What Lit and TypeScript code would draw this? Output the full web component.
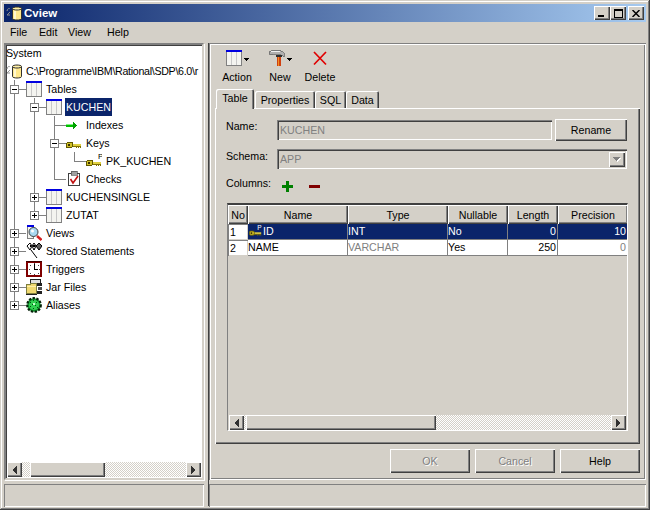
import { LitElement, html, css, svg } from "lit";
import { customElement } from "lit/decorators.js";

const line = "#808080";

// tree connector cell: v = vertical, t = tee, l = elbow, m/p = boxes with a line below, P = plus box closing a branch
const guide = (kind: string, last: boolean) => {
  const w = last ? 22 : 20;
  const down = kind === "v" || kind === "t" || kind === "m" || kind === "p";
  const box = kind === "m" || kind === "p" || kind === "P";
  return html`<svg width=${w} height="18" viewBox="0 0 ${w} 18" shape-rendering="crispEdges">
    <rect x="10" y="0" width="1" height="9" fill=${line}/>
    ${down ? svg`<rect x="10" y="9" width="1" height="9" fill=${line}/>` : ""}
    ${kind !== "v" ? svg`<rect x="10" y="9" width=${w - 10} height="1" fill=${line}/>` : ""}
    ${box
      ? svg`<rect x="6.5" y="5.5" width="8" height="8" fill="#fff" stroke=${line}/>
            <rect x="8" y="9" width="5" height="1" fill="#000"/>
            ${kind !== "m" ? svg`<rect x="10" y="7" width="1" height="5" fill="#000"/>` : ""}`
      : ""}
  </svg>`;
};

const tableIcon = () => html`<svg class="ic" width="16" height="16" viewBox="0 0 16 16" shape-rendering="crispEdges">
  <rect x="0.5" y="0.5" width="15" height="15" fill="#f4f4f0" stroke="#808080"/>
  <rect x="0" y="0" width="16" height="2" fill="#0000e0"/>
  <rect x="5" y="2" width="1" height="13" fill="#c8c8c8"/>
  <rect x="10" y="2" width="1" height="13" fill="#c8c8c8"/>
</svg>`;

const dbIcon = () => html`<svg width="16" height="15" viewBox="0 0 16 15">
  <path d="M1 5 C2 2 3 2 4 3 M1 9 L4 6 M1 9 H4" fill="none" stroke="#909090"/>
  <path d="M6.5 2.5 C6.5 0.5 15.5 0.5 15.5 2.5 V12.5 C15.5 14.5 6.5 14.5 6.5 12.5 Z" fill="#ffe88c" stroke="#303030"/>
  <path d="M6.5 2.5 C6.5 4.5 15.5 4.5 15.5 2.5" fill="#fff8c0" stroke="#303030"/>
  <rect x="8" y="5" width="2" height="8" fill="#fff8d0"/>
</svg>`;

const arrowIcon = () => html`<svg class="ic" width="16" height="16" viewBox="0 0 16 16" shape-rendering="crispEdges">
  <rect x="0" y="7" width="7" height="3" fill="#00c000"/>
  <rect x="0" y="7" width="7" height="1" fill="#80f080"/>
  <path d="M7 5 L11.5 8.5 L7 12 Z" fill="#00a000"/>
</svg>`;

const keyShape = svg`<rect x="6" y="9" width="9" height="2" fill="#e0d040"/>
  <rect x="6" y="11" width="9" height="1" fill="#807000"/>
  <rect x="10" y="12" width="1" height="1" fill="#807000"/>
  <rect x="12" y="12" width="1" height="1" fill="#807000"/>
  <rect x="14" y="12" width="1" height="1" fill="#807000"/>
  <rect x="0.5" y="7.5" width="6" height="5" rx="1.5" fill="#d0c028" stroke="#605800"/>
  <rect x="2" y="9" width="2" height="2" fill="#383000"/>`;

const keyIcon = () => html`<svg class="ic" width="16" height="16" viewBox="0 0 16 16" shape-rendering="crispEdges">${keyShape}</svg>`;

const pkIcon = () => html`<svg class="ic" width="16" height="16" viewBox="0 0 16 16" shape-rendering="crispEdges">
  ${keyShape}<text x="12" y="6" font-family="Liberation Sans" font-size="8" fill="#000">P</text>
</svg>`;

const checkIcon = () => html`<svg class="ic" width="16" height="16" viewBox="0 0 16 16" shape-rendering="crispEdges">
  <rect x="2.5" y="2.5" width="11" height="12" fill="#fff" stroke="#404040"/>
  <rect x="5" y="0" width="6" height="4" fill="#a0a0a0" stroke="#404040" stroke-width="0.6"/>
  <path d="M4.5 8 L7 12 L12 5" fill="none" stroke="#c01010" stroke-width="1.6" shape-rendering="auto"/>
</svg>`;

const viewsIcon = () => html`<svg class="ic" width="16" height="16" viewBox="0 0 16 16">
  <rect x="1.5" y="0.5" width="6" height="13" fill="#f4f4f0" stroke="#808080"/>
  <rect x="1" y="0" width="7" height="2" fill="#0000e0"/>
  <path d="M11 11 L15.5 15" stroke="#d02020" stroke-width="2.4"/>
  <circle cx="7.5" cy="7" r="4.5" fill="#a8d8f0" stroke="#404040"/>
  <circle cx="6.5" cy="6" r="1.5" fill="#fff"/>
</svg>`;

const storedIcon = () => html`<svg class="ic" width="16" height="16" viewBox="0 0 16 16">
  <path d="M1 3 H15 M8 3 V7 M5 7 L11 15" stroke="#000" fill="none"/>
  <path d="M1 3 L4 0 L6 3 L4 7 Z M6 3 L8 0 L10 3 L8 7 Z" fill="#fff" stroke="#000"/>
  <path d="M10 3 L13 0 L16 3 L13 7 Z" fill="#606060" stroke="#000"/>
  <rect x="4" y="2" width="1" height="2" fill="#000"/>
  <rect x="7" y="2" width="2" height="2" fill="#000"/>
</svg>`;

const triggerIcon = () => html`<svg class="ic" width="16" height="16" viewBox="0 0 16 16" shape-rendering="crispEdges">
  <rect x="1" y="1" width="14" height="14" fill="#fff" stroke="#800000" stroke-width="2"/>
  <rect x="0" y="0" width="16" height="1" fill="#400000"/>
  <rect x="8" y="3" width="1" height="6" fill="#000"/>
  <rect x="8" y="8" width="4" height="1" fill="#000"/>
  <g fill="#404040">
    <rect x="8" y="2" width="1" height="1"/><rect x="12" y="4" width="1" height="1"/>
    <rect x="13" y="8" width="1" height="1"/><rect x="12" y="12" width="1" height="1"/>
    <rect x="8" y="13" width="1" height="1"/><rect x="4" y="12" width="1" height="1"/>
    <rect x="3" y="8" width="1" height="1"/><rect x="4" y="4" width="1" height="1"/>
  </g>
</svg>`;

const jarIcon = () => html`<svg class="ic" width="16" height="16" viewBox="0 0 16 16" shape-rendering="crispEdges">
  <rect x="4" y="0" width="10" height="4" fill="#e0e0e0" stroke="#202020" stroke-width="1"/>
  <rect x="11" y="4" width="5" height="3" fill="#202020"/>
  <rect x="12" y="8" width="4" height="3" fill="#505050"/>
  <rect x="11" y="12" width="5" height="3" fill="#202020"/>
  <path d="M0.5 5.5 H4 L5 4.5 H10 V14.5 H0.5 Z" fill="#f0d870" stroke="#808040"/>
  <rect x="1" y="7" width="9" height="1" fill="#fff0a8"/>
  <rect x="0" y="15" width="11" height="1" fill="#202020"/>
</svg>`;

const aliasIcon = () => html`<svg class="ic" width="16" height="16" viewBox="0 0 16 16">
  <circle cx="8" cy="8" r="6.8" fill="#10a030" stroke="#042008" stroke-width="2.2" stroke-dasharray="2.4 1.4"/>
  <circle cx="8" cy="8" r="5" fill="#30d050"/>
  <g fill="#005010">
    <rect x="4" y="5" width="1" height="1"/><rect x="7" y="3" width="1" height="1"/><rect x="10" y="5" width="1" height="1"/>
    <rect x="6" y="7" width="1" height="1"/><rect x="9" y="8" width="1" height="1"/><rect x="4" y="9" width="1" height="1"/>
    <rect x="7" y="11" width="1" height="1"/><rect x="11" y="10" width="1" height="1"/>
  </g>
  <rect x="7" y="6" width="2" height="2" fill="#c0ffc8"/>
</svg>`;

const hammerIcon = () => html`<svg width="16" height="16" viewBox="0 0 16 16" shape-rendering="crispEdges">
  <path d="M0 2 L4 0 H11 L15 3 L15 7 L11 4 H6 L2 5 L0 4 Z" fill="#b0b0b0" stroke="#606060" stroke-width="0.7"/>
  <rect x="2" y="1" width="9" height="1" fill="#f0f0f0"/>
  <rect x="8" y="7" width="4" height="9" fill="#d04010"/>
  <rect x="9" y="7" width="1" height="9" fill="#f09020"/>
  <rect x="7" y="5" width="6" height="2" fill="#303030"/>
</svg>`;

const deleteIcon = () => html`<svg width="16" height="16" viewBox="0 0 16 16">
  <path d="M2 2 L14 14.5 M14 2 L2 14.5" stroke="#e00000" stroke-width="1.7" fill="none"/>
</svg>`;

const caret = () => html`<svg class="caret" width="5" height="3" viewBox="0 0 5 3" shape-rendering="crispEdges"><path d="M0 0 H5 L2.5 3 Z" fill="#000"/></svg>`;

const plusIcon = () => html`<svg width="11" height="11" viewBox="0 0 11 11" shape-rendering="crispEdges">
  <rect x="4" y="0" width="3" height="11" fill="#008000"/><rect x="0" y="4" width="11" height="3" fill="#008000"/>
</svg>`;
const minusIcon = () => html`<svg width="11" height="11" viewBox="0 0 11 11" shape-rendering="crispEdges">
  <rect x="0" y="4" width="11" height="3" fill="#800000"/>
</svg>`;

const dirArrow = (left: boolean) => html`<svg width="5" height="8" viewBox="0 0 5 8" shape-rendering="crispEdges">
  <path d=${left ? "M5 0 V8 L0 4 Z" : "M0 0 V8 L5 4 Z"} fill="#303030"/>
</svg>`;

interface TreeRow {
  guides: string;
  icon: () => unknown;
  label: string;
  selected?: boolean;
}

const tree: TreeRow[] = [
  { guides: "m", icon: tableIcon, label: "Tables" },
  { guides: "vm", icon: tableIcon, label: "KUCHEN", selected: true },
  { guides: "vvt", icon: arrowIcon, label: "Indexes" },
  { guides: "vvm", icon: keyIcon, label: "Keys" },
  { guides: "vvvl", icon: pkIcon, label: "PK_KUCHEN" },
  { guides: "vvl", icon: checkIcon, label: "Checks" },
  { guides: "vp", icon: tableIcon, label: "KUCHENSINGLE" },
  { guides: "vP", icon: tableIcon, label: "ZUTAT" },
  { guides: "p", icon: viewsIcon, label: "Views" },
  { guides: "p", icon: storedIcon, label: "Stored Statements" },
  { guides: "p", icon: triggerIcon, label: "Triggers" },
  { guides: "p", icon: jarIcon, label: "Jar Files" },
  { guides: "P", icon: aliasIcon, label: "Aliases" },
];

const columns = [
  { name: "No", w: 20 },
  { name: "Name", w: 100 },
  { name: "Type", w: 100 },
  { name: "Nullable", w: 60 },
  { name: "Length", w: 50 },
  { name: "Precision", w: 70 },
];

@customElement("app-root")
export class AppRoot extends LitElement {
  static styles = css`
    :host {
      display: block;
      font-family: "Liberation Sans", Arial, sans-serif;
      font-size: 10.67px;
      color: #000;
    }
    * {
      box-sizing: border-box;
    }
    svg {
      display: block;
      flex: none;
    }
    .window {
      width: 650px;
      height: 510px;
      padding: 4px;
      background: #d4d0c8;
      box-shadow: inset -1px -1px #404040, inset 1px 1px #d4d0c8, inset -2px -2px #808080, inset 2px 2px #fff;
      display: flex;
      flex-direction: column;
    }
    .title {
      height: 18px;
      flex: none;
      background: linear-gradient(90deg, #0a246a, #a6caf0);
      display: flex;
      align-items: center;
      padding: 0 2px 0 2px;
      color: #fff;
      font-weight: bold;
      font-size: 11.5px;
    }
    .title .name {
      margin-left: 2px;
      flex: 1;
    }
    .winbtn {
      width: 16px;
      height: 14px;
      background: #d4d0c8;
      box-shadow: inset 1px 1px #fff, inset -1px -1px #404040, inset -2px -2px #808080;
      display: flex;
      align-items: center;
      justify-content: center;
    }
    .winbtn.close {
      margin-left: 2px;
    }
    .winbtn .minglyph {
      margin: 6px 2px 0 0;
    }
    .menu {
      height: 20px;
      flex: none;
      display: grid;
      grid-template-columns: 29px 29px 39px auto;
      align-items: center;
      padding-left: 6px;
    }
    .main {
      margin-top: 1px;
      flex: 1;
      display: flex;
      min-height: 0;
    }
    .col {
      display: flex;
      flex-direction: column;
      gap: 4px;
    }
    .col.left {
      width: 200px;
    }
    .col.right {
      width: 437px;
    }
    .sash {
      width: 5px;
      border-right: 1px solid #404040;
    }
    .status {
      height: 23px;
      flex: none;
      box-shadow: inset 1px 1px #808080, inset -1px -1px #fff;
    }
    .treepane {
      height: 437px;
      flex: none;
      background: #fff;
      border: 2px solid;
      border-color: #808080 #d4d0c8 #d4d0c8 #808080;
      box-shadow: 1px 1px #fff, inset 1px 1px #404040;
      display: flex;
      flex-direction: column;
      overflow: hidden;
    }
    .tree {
      flex: 1;
      overflow: hidden;
      min-height: 0;
      margin-top: -1px;
    }
    .row {
      height: 18px;
      display: flex;
      align-items: center;
      white-space: nowrap;
    }
    .guides {
      display: flex;
      margin-left: -2px;
    }
    .dbrow .path {
      margin-left: 4px;
      letter-spacing: -0.3px;
    }
    .label {
      margin-left: 3px;
      padding: 0 1px;
      height: 18px;
      line-height: 18px;
    }
    .label.sel {
      background: #0a246a;
      color: #fff;
    }
    .hbar {
      height: 15px;
      flex: none;
      display: flex;
      margin: 0 1px;
      background-image: conic-gradient(#d4d0c8 25%, #fff 0 50%, #d4d0c8 0 75%, #fff 0);
      background-size: 2px 2px;
    }
    .treepane .hbar {
      margin: 0 1px 1px 1px;
    }
    .sbtn {
      width: 15px;
      flex: none;
      background: #d4d0c8;
      box-shadow: inset 1px 1px #fff, inset -1px -1px #404040, inset -2px -2px #808080;
      display: flex;
      align-items: center;
      justify-content: center;
    }
    .thumb {
      background: #d4d0c8;
      box-shadow: inset 1px 1px #fff, inset -1px -1px #404040, inset -2px -2px #808080;
    }
    .treepane .thumb {
      margin-left: 8px;
      width: 75px;
    }
    .spacer {
      flex: 1;
    }
    .rightpane {
      height: 437px;
      flex: none;
      padding: 2px 6px 0 6px;
      box-shadow: inset 1px 1px #808080, inset 2px 2px #fff, inset -1px -1px #fff, inset -2px -2px #808080;
      display: flex;
      flex-direction: column;
    }
    .toolbar {
      height: 44px;
      flex: none;
      display: flex;
    }
    .tool {
      display: flex;
      flex-direction: column;
      align-items: center;
    }
    .tool.action {
      width: 44px;
    }
    .tool.newbtn {
      width: 42px;
    }
    .tool.del {
      width: 38px;
    }
    .tool .top {
      height: 16px;
      margin-top: 5px;
      display: flex;
      align-items: center;
      gap: 2px;
    }
    .tool .text {
      margin-top: 5px;
    }
    .caret {
      margin-top: 2px;
    }
    .tabs {
      height: 19px;
      flex: none;
      display: flex;
      align-items: flex-end;
      padding-left: 1px;
    }
    .tab {
      height: 17px;
      padding-top: 3px;
      text-align: center;
      background: #d4d0c8;
      border-radius: 2px 2px 0 0;
      box-shadow: inset 1px 1px #fff, inset -1px 0 #404040, inset -2px 0 #808080;
    }
    .tab.active {
      height: 20px;
      margin-bottom: -1px;
      padding-top: 3px;
      position: relative;
      z-index: 1;
    }
    .body {
      height: 336px;
      flex: none;
      padding: 11px 13px 0 11px;
      box-shadow: inset 1px 1px #fff, inset -1px -1px #404040, inset -2px -2px #808080;
      display: flex;
      flex-direction: column;
    }
    .form-row {
      display: grid;
      grid-template-columns: 51px 1fr;
    }
    .form-row.name-row {
      height: 22px;
    }
    .form-row.schema-row {
      height: 20px;
      margin-top: 8px;
    }
    .form-row.columns-row {
      height: 20px;
      margin-top: 6px;
    }
    .lbl {
      padding-top: 1px;
    }
    .columns-row .lbl {
      padding-top: 2px;
    }
    .name-fields {
      display: flex;
      gap: 3px;
    }
    .field {
      flex: 1;
      height: 20px;
      margin-top: 1px;
      padding: 4px 0 0 3px;
      color: #808080;
      box-shadow: inset 1px 1px #808080, inset 2px 2px #404040, inset -1px -1px #fff;
    }
    .combo {
      height: 20px;
      padding: 4px 0 0 3px;
      color: #808080;
      box-shadow: inset 1px 1px #808080, inset 2px 2px #404040, inset -1px -1px #fff;
      display: flex;
      justify-content: space-between;
    }
    .combo .drop {
      width: 16px;
      height: 15px;
      margin: -1px 2px 0 0;
      background: #d4d0c8;
      box-shadow: inset 1px 1px #fff, inset -1px -1px #404040, inset -2px -2px #808080;
      display: flex;
      align-items: center;
      justify-content: center;
    }
    .btn {
      background: #d4d0c8;
      box-shadow: inset 1px 1px #fff, inset -1px -1px #404040, inset -2px -2px #808080;
      display: flex;
      align-items: center;
      justify-content: center;
    }
    .btn.rename {
      width: 72px;
      height: 22px;
    }
    .btn.dialog {
      width: 80px;
      height: 24px;
    }
    .btn.off {
      color: #808080;
      text-shadow: 1px 1px #fff;
    }
    .addrem {
      display: flex;
      gap: 16px;
      padding: 6px 0 0 5px;
    }
    .grid {
      width: 401px;
      height: 228px;
      margin: 8px 0 0 1px;
      flex: none;
      border-style: solid;
      border-width: 2px 1px 1px 1px;
      border-color: #404040 #fff #fff #808080;
      display: flex;
      flex-direction: column;
      overflow: hidden;
    }
    .grid .hbar {
      margin: 0 1px 0 1px;
    }
    .grid .thumb {
      margin-left: 2px;
      width: 190px;
    }
    .line {
      display: flex;
      flex: none;
      width: 400px;
    }
    .head {
      height: 19px;
      display: flex;
      align-items: center;
      justify-content: center;
      background: #d4d0c8;
      box-shadow: inset 1px 1px #fff, inset -1px -1px #404040, inset -2px -2px #808080;
    }
    .cell {
      height: 16px;
      line-height: 15px;
      padding: 0 1px 0 0;
      background: #fff;
      border-right: 1px solid #808080;
      border-bottom: 1px solid #808080;
      white-space: nowrap;
      overflow: hidden;
      display: flex;
      align-items: center;
      gap: 1px;
    }
    .cell.num {
      justify-content: flex-end;
    }
    .cell.rowhead {
      box-shadow: inset 1px 1px #808080, inset -1px -1px #d4d0c8;
      padding-left: 2px;
      border: 0;
    }
    .sel .cell:not(.rowhead) {
      background: #0a246a;
      color: #fff;
    }
    .grey {
      color: #808080;
    }
    .sel .cell.grey {
      color: #fff;
    }
    .gkey {
      margin-left: 1px;
    }
    .dialogbar {
      display: flex;
      justify-content: flex-end;
      gap: 5px;
      margin-top: 5px;
    }
  `;

  private hbar() {
    return html`<div class="hbar">
      <div class="sbtn">${dirArrow(true)}</div>
      <div class="thumb"></div>
      <div class="spacer"></div>
      <div class="sbtn">${dirArrow(false)}</div>
    </div>`;
  }

  private treeRow(r: TreeRow) {
    const cells = r.guides.split("");
    return html`<div class="row">
      <div class="guides">
        ${cells.map((c, i) => guide(c, i === cells.length - 1))}
      </div>
      ${r.icon()}
      <span class="label ${r.selected ? "sel" : ""}">${r.label}</span>
    </div>`;
  }

  private gridCell(w: number, text: unknown, cls = "") {
    return html`<div class="cell ${cls}" style="width:${w}px">${text}</div>`;
  }

  render() {
    return html`<div class="window">
      <div class="title">
        ${dbIcon()}
        <span class="name">Cview</span>
        <div class="winbtn">
          <svg class="minglyph" width="6" height="2" shape-rendering="crispEdges"><rect width="6" height="2" fill="#000"/></svg>
        </div>
        <div class="winbtn">
          <svg width="9" height="9" viewBox="0 0 9 9" shape-rendering="crispEdges"><path d="M0.5 1.5 H8.5 V8.5 H0.5 Z" fill="none" stroke="#000"/><rect width="9" height="2" fill="#000"/></svg>
        </div>
        <div class="winbtn close">
          <svg width="8" height="7" viewBox="0 0 8 7"><path d="M0.5 0 L7.5 7 M7.5 0 L0.5 7" stroke="#000" stroke-width="1.5"/></svg>
        </div>
      </div>
      <div class="menu"><span>File</span><span>Edit</span><span>View</span><span>Help</span></div>
      <div class="main">
        <div class="col left">
          <div class="treepane">
            <div class="tree">
              <div class="row">System</div>
              <div class="row dbrow">
                ${dbIcon()}
                <span class="path">C:\\Programme\\IBM\\Rational\\SDP\\6.0\\r</span>
              </div>
              ${tree.map((r) => this.treeRow(r))}
            </div>
            ${this.hbar()}
          </div>
          <div class="status"></div>
        </div>
        <div class="sash"></div>
        <div class="col right">
          <div class="rightpane">
            <div class="toolbar">
              <div class="tool action">
                <div class="top">${tableIcon()}${caret()}</div>
                <div class="text">Action</div>
              </div>
              <div class="tool newbtn">
                <div class="top">${hammerIcon()}${caret()}</div>
                <div class="text">New</div>
              </div>
              <div class="tool del">
                <div class="top">${deleteIcon()}</div>
                <div class="text">Delete</div>
              </div>
            </div>
            <div class="tabs">
              <div class="tab active" style="width:38px">Table</div>
              <div class="tab" style="width:60px;margin-left:1px">Properties</div>
              <div class="tab" style="width:31px">SQL</div>
              <div class="tab" style="width:33px">Data</div>
            </div>
            <div class="body">
              <div class="form-row name-row">
                <div class="lbl">Name:</div>
                <div class="name-fields">
                  <div class="field">KUCHEN</div>
                  <div class="btn rename">Rename</div>
                </div>
              </div>
              <div class="form-row schema-row">
                <div class="lbl">Schema:</div>
                <div class="combo">
                  <span>APP</span>
                  <div class="drop">
                    <svg width="9" height="6" viewBox="0 0 9 6" shape-rendering="crispEdges"><path d="M1 1 H8 L4.5 5 Z" fill="#fff"/><path d="M0 0 H7 L3.5 4 Z" fill="#808080"/></svg>
                  </div>
                </div>
              </div>
              <div class="form-row columns-row">
                <div class="lbl">Columns:</div>
                <div class="addrem">${plusIcon()}${minusIcon()}</div>
              </div>
              <div class="grid">
                <div class="line">
                  ${columns.map((c) => html`<div class="head" style="width:${c.w}px">${c.name}</div>`)}
                </div>
                <div class="line sel">
                  ${this.gridCell(20, "1", "rowhead")}
                  ${this.gridCell(100, html`<svg class="gkey" width="13" height="13" viewBox="0 0 16 16">${keyShape}<text x="10" y="6" font-family="Liberation Sans" font-size="8" fill="#fff">P</text></svg><span>ID</span>`)}
                  ${this.gridCell(100, "INT", "grey")}
                  ${this.gridCell(60, "No")}
                  ${this.gridCell(50, "0", "num")}
                  ${this.gridCell(70, "10", "num")}
                </div>
                <div class="line">
                  ${this.gridCell(20, "2", "rowhead")}
                  ${this.gridCell(100, "NAME")}
                  ${this.gridCell(100, "VARCHAR", "grey")}
                  ${this.gridCell(60, "Yes")}
                  ${this.gridCell(50, "250", "num")}
                  ${this.gridCell(70, "0", "num grey")}
                </div>
                <div class="spacer"></div>
                ${this.hbar()}
              </div>
            </div>
            <div class="dialogbar">
              <div class="btn dialog off">OK</div>
              <div class="btn dialog off">Cancel</div>
              <div class="btn dialog">Help</div>
            </div>
          </div>
          <div class="status"></div>
        </div>
      </div>
    </div>`;
  }
}
